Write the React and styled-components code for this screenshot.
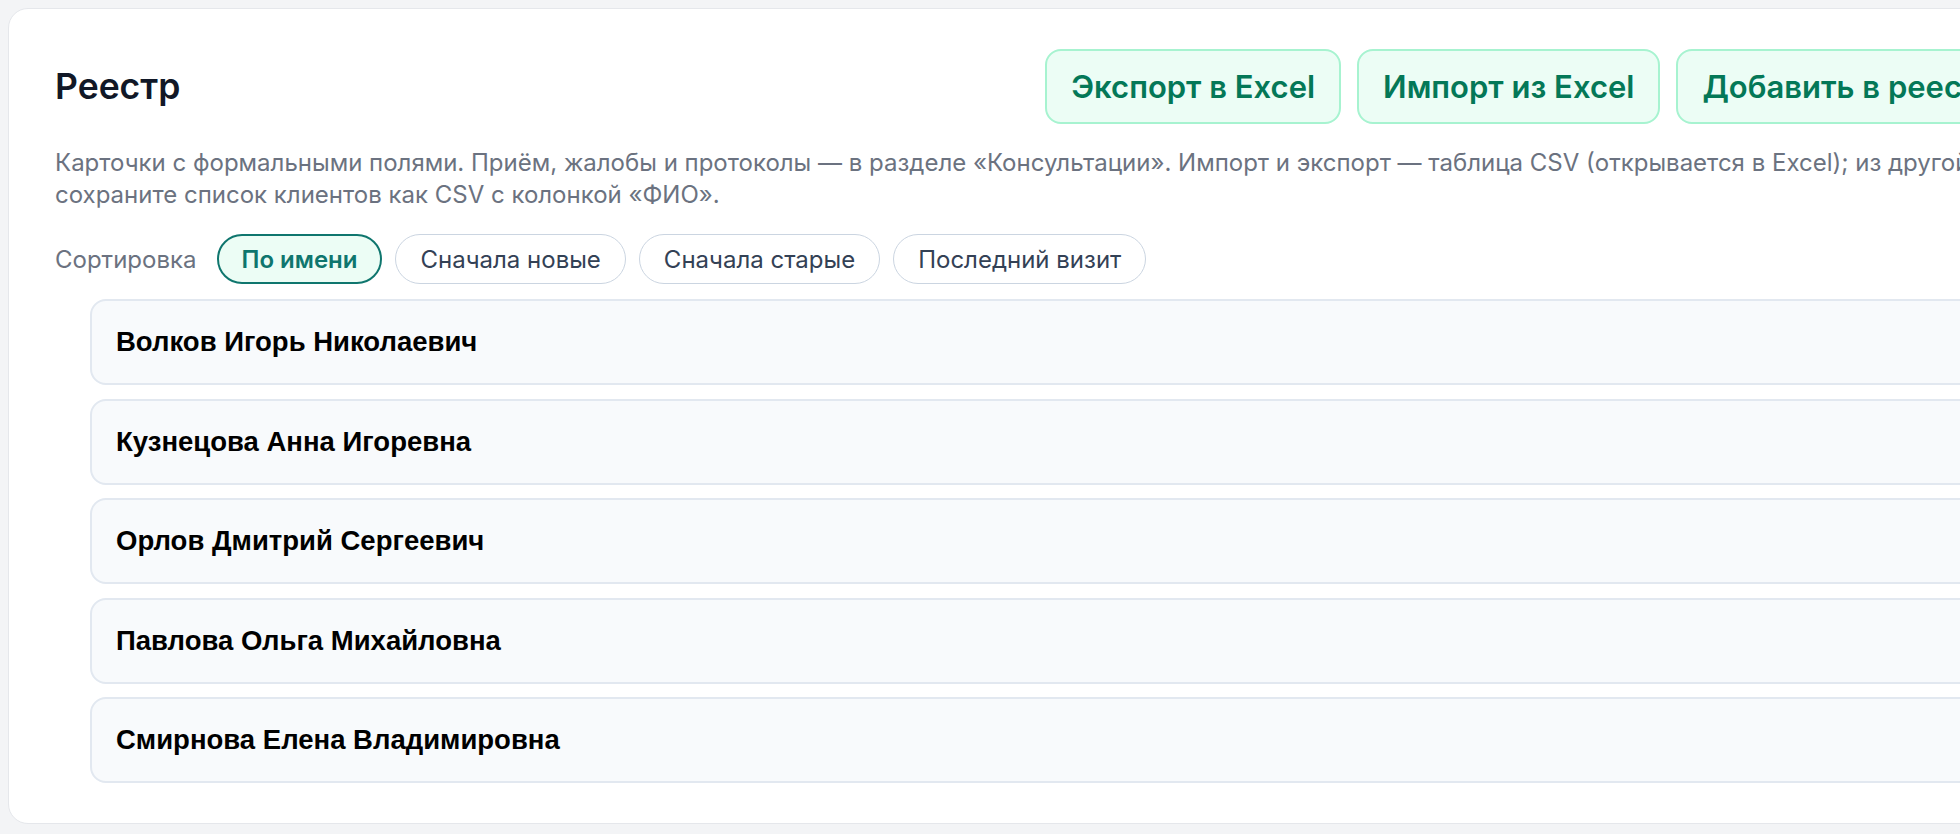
import React, { useState } from 'react';
import styled, { createGlobalStyle } from 'styled-components';

const GlobalStyle = createGlobalStyle`
  html, body {
    background: #f3f4f6;
  }
  body {
    margin: 0;
    font-family: Inter, "Noto Sans", sans-serif;
    color: #111827;
  }
`;

const clients = [
  'Волков Игорь Николаевич',
  'Кузнецова Анна Игоревна',
  'Орлов Дмитрий Сергеевич',
  'Павлова Ольга Михайловна',
  'Смирнова Елена Владимировна',
];

const sorts = ['По имени', 'Сначала новые', 'Сначала старые', 'Последний визит'];

const App = () => {
  const [sort, setSort] = useState('По имени');

  return (
    <Page>
      <GlobalStyle />
      <Card>
        <Header>
          <Title>Реестр</Title>
          <Actions>
            <ActionButton>Экспорт в Excel</ActionButton>
            <ActionButton>Импорт из Excel</ActionButton>
            <ActionButton>Добавить в реестр</ActionButton>
          </Actions>
        </Header>
        <Hint>
          Карточки с формальными полями. Приём, жалобы и протоколы — в разделе «Консультации». Импорт и
          экспорт — таблица CSV (открывается в Excel); из другой CRM
          <br />
          сохраните список клиентов как CSV с колонкой «ФИО».
        </Hint>
        <SortRow>
          <SortLabel>Сортировка</SortLabel>
          {sorts.map((s) => (
            <Pill key={s} $active={s === sort} onClick={() => setSort(s)}>
              {s}
            </Pill>
          ))}
        </SortRow>
        <List>
          {clients.map((name) => (
            <li key={name}>
              <Row>{name}</Row>
            </li>
          ))}
        </List>
      </Card>
    </Page>
  );
};

export default App;

const Page = styled.div`
  padding: 8px 0 8px 8px;
  overflow: hidden;
`;

const Card = styled.section`
  width: 2062px;
  box-sizing: border-box;
  background: #fff;
  border: 1px solid #e5e7eb;
  border-radius: 20px;
  padding: 40px 46px;
`;

const Header = styled.div`
  display: flex;
  align-items: center;
  justify-content: space-between;
`;

const Title = styled.h1`
  margin: 0;
  font-size: 35.5px;
  font-weight: 600;
  color: #111827;
`;

const Actions = styled.div`
  display: flex;
  gap: 16px;
`;

const ActionButton = styled.button`
  flex-shrink: 0;
  font-family: inherit;
  font-size: 31px;
  font-weight: 600;
  line-height: 1.2;
  color: #047857;
  background: #ecfdf5;
  border: 2px solid #a7f3d0;
  border-radius: 16px;
  padding: 17px 24px;
  cursor: pointer;
`;

const Hint = styled.p`
  margin: 23px 0 0;
  font-size: 24px;
  line-height: 32px;
  color: #6b7280;
  white-space: nowrap;
`;

const SortRow = styled.div`
  display: flex;
  align-items: center;
  gap: 13px;
  margin-top: 23px;
`;

const SortLabel = styled.span`
  font-size: 24px;
  color: #6b7280;
  margin-right: 7px;
`;

const Pill = styled.button`
  height: 50px;
  box-sizing: border-box;
  padding: 0 ${(p) => (p.$active ? 23 : 24)}px;
  font-family: inherit;
  font-size: 24px;
  font-weight: ${(p) => (p.$active ? 600 : 400)};
  color: ${(p) => (p.$active ? '#0f766e' : '#334155')};
  background: ${(p) => (p.$active ? '#ecfdf5' : '#fff')};
  border: ${(p) => (p.$active ? '2px solid #0f766e' : '1.5px solid #cbd5e1')};
  border-radius: 999px;
  cursor: pointer;
`;

const List = styled.ul`
  list-style: none;
  margin: 15px 0 0;
  padding: 0 0 0 35px;
  & > li + li {
    margin-top: 13.5px;
  }
`;

const Row = styled.button`
  display: block;
  width: 100%;
  height: 86px;
  box-sizing: border-box;
  padding: 0 24px;
  text-align: left;
  font-family: "Liberation Sans", Arial, sans-serif;
  font-size: 27.5px;
  font-weight: 600;
  color: #000;
  background: #f8fafc;
  border: 2px solid #e2e8f0;
  border-radius: 16px;
  cursor: pointer;
`;
